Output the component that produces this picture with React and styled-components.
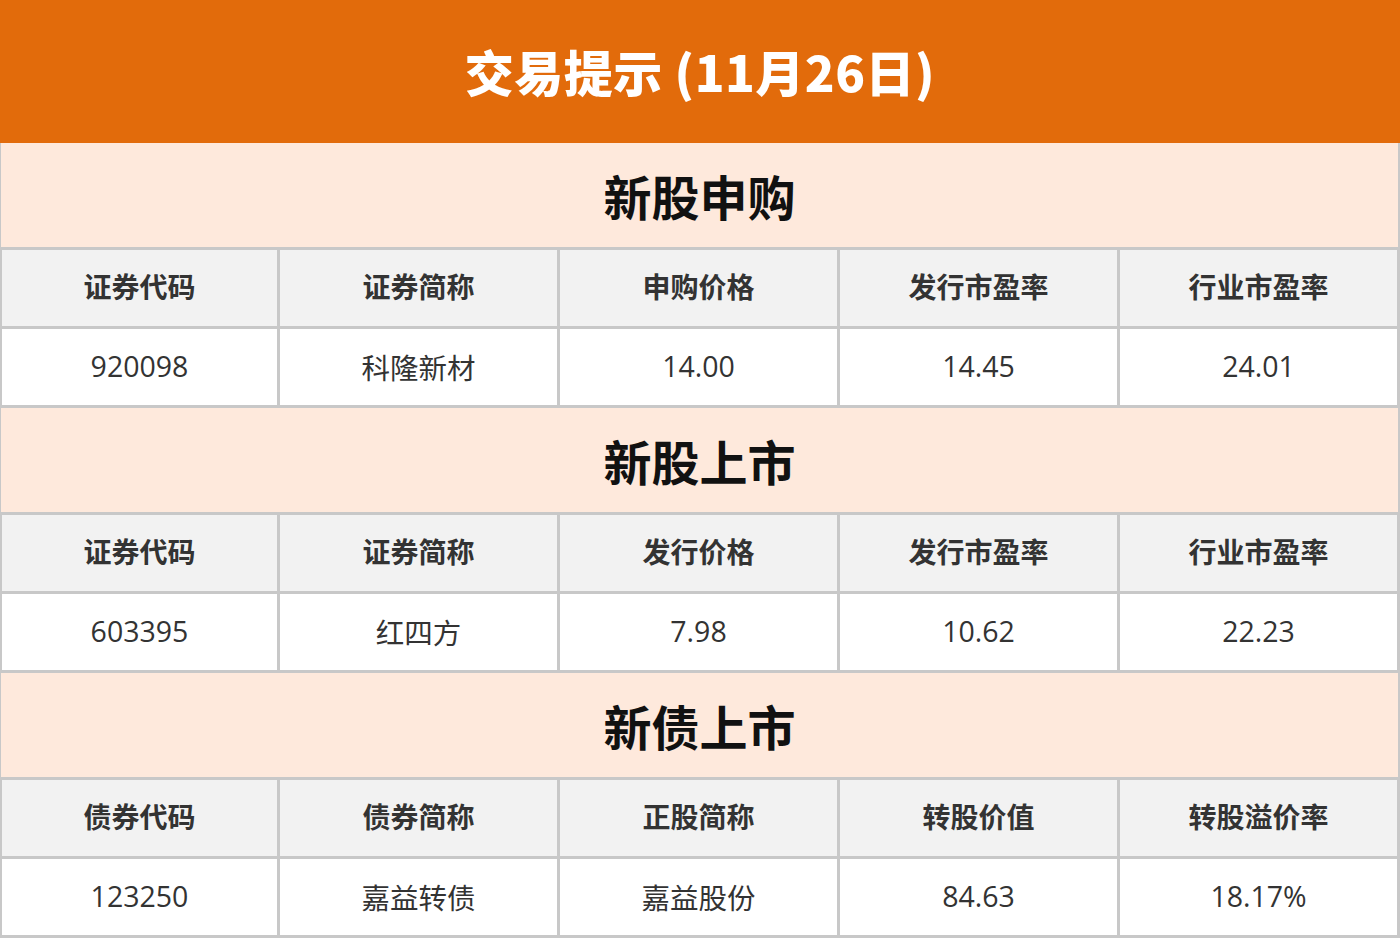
import { Fragment } from 'react';
import styled, { createGlobalStyle } from 'styled-components';

const GlobalStyle = createGlobalStyle`
  html, body { margin: 0; padding: 0; background: #ffffff; }
  body { font-family: "Open Sans", "Noto Sans CJK SC", sans-serif; }
`;

const Page = styled.div`
  width: 1400px;
  height: 940px;
  overflow: hidden;
  display: flex;
  flex-direction: column;
`;

const Banner = styled.div`
  height: 143px;
  flex-shrink: 0;
  background: #e26b0b;
  color: #ffffff;
  display: flex;
  align-items: center;
  justify-content: center;
  font-family: "Noto Sans CJK SC", sans-serif;
  font-weight: 900;
  font-size: 49px;
  letter-spacing: 0.5px;
  padding-bottom: 2px;
  box-sizing: border-box;
`;

const Board = styled.div`
  display: flex;
  flex-direction: column;
  gap: 3px;
  background: #c8c8c8;
  padding: 0 3px 3px 2px;
`;

const SectionTitle = styled.div`
  height: 104px;
  margin: 0 -1px;
  background: #fee9dc;
  display: flex;
  align-items: center;
  justify-content: center;
  font-family: "Noto Sans CJK SC", sans-serif;
  font-weight: 700;
  font-size: 48px;
  color: #111111;
`;

const Row = styled.div`
  display: grid;
  grid-template-columns: 275px repeat(4, 1fr);
  gap: 3px;
  height: 76px;
`;

const Cell = styled.div`
  background: ${({ $head }) => ($head ? '#f2f2f2' : '#ffffff')};
  display: flex;
  align-items: center;
  justify-content: center;
  color: #333333;
  font-family: ${({ $head }) =>
    $head ? '"Noto Sans CJK SC", sans-serif' : '"Open Sans", "Noto Sans CJK SC", sans-serif'};
  font-weight: ${({ $head }) => ($head ? 700 : 400)};
  font-size: ${({ $head }) => ($head ? '28px' : '28.5px')};
  padding-bottom: ${({ $head }) => ($head ? '4px' : '2px')};
  box-sizing: border-box;
`;

const sections = [
  {
    title: '新股申购',
    head: ['证券代码', '证券简称', '申购价格', '发行市盈率', '行业市盈率'],
    data: ['920098', '科隆新材', '14.00', '14.45', '24.01'],
  },
  {
    title: '新股上市',
    head: ['证券代码', '证券简称', '发行价格', '发行市盈率', '行业市盈率'],
    data: ['603395', '红四方', '7.98', '10.62', '22.23'],
  },
  {
    title: '新债上市',
    head: ['债券代码', '债券简称', '正股简称', '转股价值', '转股溢价率'],
    data: ['123250', '嘉益转债', '嘉益股份', '84.63', '18.17%'],
  },
];

export default function App() {
  return (
    <Page>
      <GlobalStyle />
      <Banner>交易提示 (11月26日)</Banner>
      <Board>
        {sections.map((s) => (
          <Fragment key={s.title}>
            <SectionTitle>{s.title}</SectionTitle>
            <Row>
              {s.head.map((h, i) => (
                <Cell $head key={i}>{h}</Cell>
              ))}
            </Row>
            <Row>
              {s.data.map((d, i) => (
                <Cell key={i}>{d}</Cell>
              ))}
            </Row>
          </Fragment>
        ))}
      </Board>
    </Page>
  );
}
